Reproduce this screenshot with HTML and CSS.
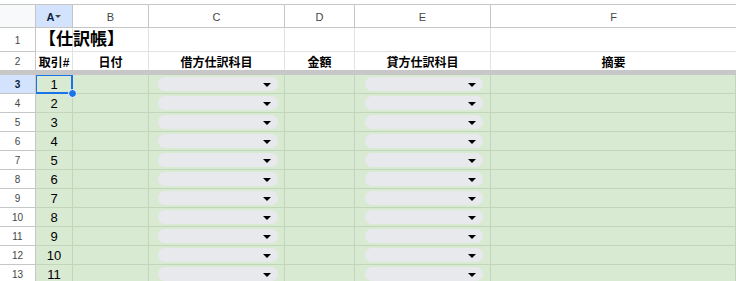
FILE: index.html
```html
<!DOCTYPE html>
<html lang="ja">
<head>
<meta charset="utf-8">
<title>仕訳帳</title>
<link rel="stylesheet" href="styles.css">
</head>
<body>
<div class="sheet">
  <!-- column headers -->
  <div class="corner"></div>
  <div class="ch ch-sel">A<span class="ch-tri"></span></div>
  <div class="ch">B</div>
  <div class="ch">C</div>
  <div class="ch">D</div>
  <div class="ch">E</div>
  <div class="ch ch-last">F</div>

  <!-- row 1 -->
  <div class="rh r1">1</div>
  <div class="w r1 title-cell"><span class="title">【仕訳帳】</span></div>
  <div class="w r1"></div>
  <div class="w r1"></div>
  <div class="w r1"></div>
  <div class="w r1"></div>
  <div class="w r1 last"></div>

  <!-- row 2 -->
  <div class="rh r2">2</div>
  <div class="w r2 hd">取引#</div>
  <div class="w r2 hd">日付</div>
  <div class="w r2 hd">借方仕訳科目</div>
  <div class="w r2 hd">金額</div>
  <div class="w r2 hd">貸方仕訳科目</div>
  <div class="w r2 hd last">摘要</div>

  <!-- freeze bar -->
  <div class="freeze"></div>

  <!-- data rows -->
  <div class="rh rh-sel">3</div>
  <div class="g num sel">1<span class="handle"></span></div>
  <div class="g"></div>
  <div class="g"><span class="chip chip-c"><span class="tri"></span></span></div>
  <div class="g"></div>
  <div class="g"><span class="chip chip-e"><span class="tri"></span></span></div>
  <div class="g last"></div>

  <div class="rh">4</div>
  <div class="g num">2</div>
  <div class="g"></div>
  <div class="g"><span class="chip chip-c"><span class="tri"></span></span></div>
  <div class="g"></div>
  <div class="g"><span class="chip chip-e"><span class="tri"></span></span></div>
  <div class="g last"></div>

  <div class="rh">5</div>
  <div class="g num">3</div>
  <div class="g"></div>
  <div class="g"><span class="chip chip-c"><span class="tri"></span></span></div>
  <div class="g"></div>
  <div class="g"><span class="chip chip-e"><span class="tri"></span></span></div>
  <div class="g last"></div>

  <div class="rh">6</div>
  <div class="g num">4</div>
  <div class="g"></div>
  <div class="g"><span class="chip chip-c"><span class="tri"></span></span></div>
  <div class="g"></div>
  <div class="g"><span class="chip chip-e"><span class="tri"></span></span></div>
  <div class="g last"></div>

  <div class="rh">7</div>
  <div class="g num">5</div>
  <div class="g"></div>
  <div class="g"><span class="chip chip-c"><span class="tri"></span></span></div>
  <div class="g"></div>
  <div class="g"><span class="chip chip-e"><span class="tri"></span></span></div>
  <div class="g last"></div>

  <div class="rh">8</div>
  <div class="g num">6</div>
  <div class="g"></div>
  <div class="g"><span class="chip chip-c"><span class="tri"></span></span></div>
  <div class="g"></div>
  <div class="g"><span class="chip chip-e"><span class="tri"></span></span></div>
  <div class="g last"></div>

  <div class="rh">9</div>
  <div class="g num">7</div>
  <div class="g"></div>
  <div class="g"><span class="chip chip-c"><span class="tri"></span></span></div>
  <div class="g"></div>
  <div class="g"><span class="chip chip-e"><span class="tri"></span></span></div>
  <div class="g last"></div>

  <div class="rh">10</div>
  <div class="g num">8</div>
  <div class="g"></div>
  <div class="g"><span class="chip chip-c"><span class="tri"></span></span></div>
  <div class="g"></div>
  <div class="g"><span class="chip chip-e"><span class="tri"></span></span></div>
  <div class="g last"></div>

  <div class="rh">11</div>
  <div class="g num">9</div>
  <div class="g"></div>
  <div class="g"><span class="chip chip-c"><span class="tri"></span></span></div>
  <div class="g"></div>
  <div class="g"><span class="chip chip-e"><span class="tri"></span></span></div>
  <div class="g last"></div>

  <div class="rh">12</div>
  <div class="g num">10</div>
  <div class="g"></div>
  <div class="g"><span class="chip chip-c"><span class="tri"></span></span></div>
  <div class="g"></div>
  <div class="g"><span class="chip chip-e"><span class="tri"></span></span></div>
  <div class="g last"></div>

  <div class="rh">13</div>
  <div class="g num">11</div>
  <div class="g"></div>
  <div class="g"><span class="chip chip-c"><span class="tri"></span></span></div>
  <div class="g"></div>
  <div class="g"><span class="chip chip-e"><span class="tri"></span></span></div>
  <div class="g last"></div>
</div>
</body>
</html>
```

FILE: styles.css
```css
* { box-sizing: border-box; }

html, body {
  margin: 0;
  padding: 0;
  background: #ffffff;
  overflow: hidden;
}

body {
  font-family: "Liberation Sans", "Noto Sans CJK JP", sans-serif;
  color: #000;
  padding-top: 4px;
}

.sheet {
  display: grid;
  grid-template-columns: 36px 37px 76px 136px 70px 136px 1fr;
  grid-template-rows: 23px 24px 18px 5px repeat(11, 19px);
  border-top: 1px solid #c4c7c5;
  width: 736px;
}

/* column headers */
.corner {
  background: #f8f9fa;
  border-right: 1px solid #c4c7c5;
  border-bottom: 1px solid #c4c7c5;
}

.ch {
  display: flex;
  align-items: center;
  justify-content: center;
  font-size: 11px;
  color: #444746;
  background: #ffffff;
  border-right: 1px solid #c4c7c5;
  border-bottom: 1px solid #c4c7c5;
  padding-top: 1px;
}

.ch-sel {
  background: #d3e3fd;
  color: #0b1f45;
  font-weight: bold;
}

.ch-tri {
  display: inline-block;
  width: 0;
  height: 0;
  margin-left: 1px;
  border-left: 3px solid transparent;
  border-right: 3px solid transparent;
  border-top: 3px solid #444746;
}

.ch-last { border-right: none; }

/* row headers */
.rh {
  display: flex;
  align-items: center;
  justify-content: center;
  font-size: 10px;
  color: #444746;
  background: #ffffff;
  border-right: 1px solid #c4c7c5;
  border-bottom: 1px solid #c4c7c5;
  padding-top: 1px;
}

.rh.r2 { border-bottom: none; }

.rh-sel {
  background: #d3e3fd;
  color: #0b1f45;
  font-weight: bold;
}

/* white cells */
.w {
  border-right: 1px solid #e1e3e1;
  border-bottom: 1px solid #e1e3e1;
  background: #ffffff;
}

.w.r2 { border-bottom: none; }

.last { border-right: none; }

.title-cell {
  position: relative;
  overflow: visible;
}

.title {
  position: absolute;
  left: 3px;
  top: 2px;
  white-space: nowrap;
  font-size: 17px;
  font-weight: bold;
  line-height: 20px;
  z-index: 1;
}

.hd {
  display: flex;
  align-items: center;
  justify-content: center;
  font-size: 12px;
  font-weight: bold;
  white-space: nowrap;
  padding-top: 1px;
}

.freeze {
  grid-column: 1 / -1;
  background: #c7c7c7;
}

/* green data cells */
.g {
  background: #d9ead3;
  border-right: 1px solid #c3d6bc;
  border-bottom: 1px solid #c3d6bc;
  display: flex;
  align-items: flex-start;
}

.num {
  align-items: center;
  justify-content: center;
  font-size: 13px;
  padding-top: 1px;
}

.sel {
  position: relative;
  outline: 1px solid #1a73e8;
  outline-offset: -1px;
  box-shadow: inset 0 0 0 1px #1a73e8;
  z-index: 2;
}

.handle {
  position: absolute;
  right: -5px;
  bottom: -5px;
  width: 9px;
  height: 9px;
  border-radius: 50%;
  background: #1a73e8;
  border: 1px solid #ffffff;
}

.chip {
  display: flex;
  align-items: center;
  justify-content: flex-end;
  height: 14px;
  margin-top: 2px;
  border-radius: 7px;
  background: #e8e9ed;
  padding-right: 7px;
  flex: 1;
}

.chip-c { margin-left: 9px; margin-right: 6px; }
.chip-e { margin-left: 10px; margin-right: 7px; }

.tri {
  width: 0;
  height: 0;
  border-left: 4px solid transparent;
  border-right: 4px solid transparent;
  border-top: 4px solid #000000;
  margin-top: 1px;
}
```
